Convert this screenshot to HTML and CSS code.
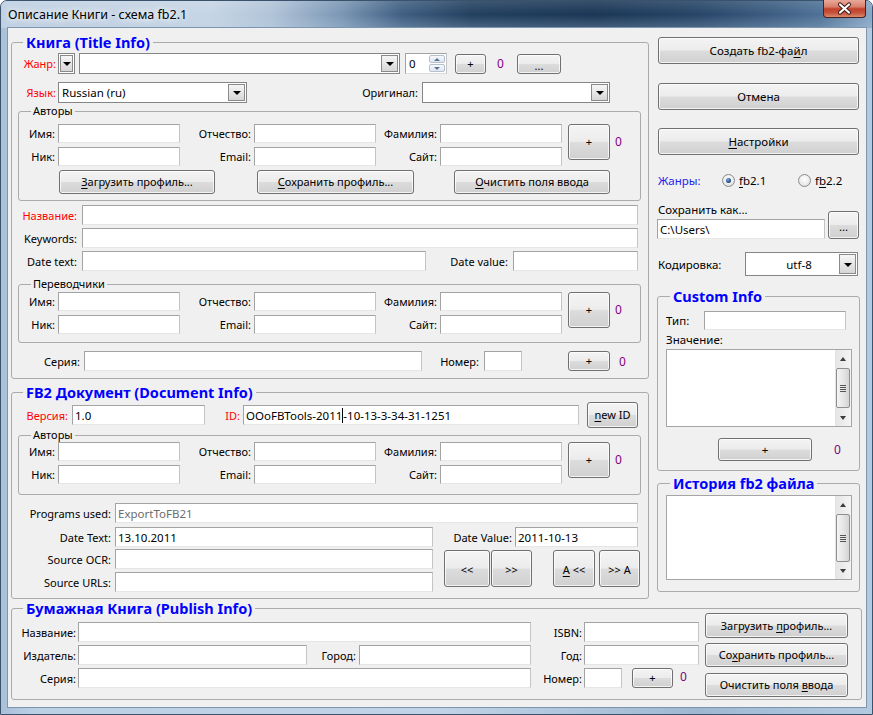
FILE: index.html
```html
<!DOCTYPE html>
<html lang="ru">
<head>
<meta charset="utf-8">
<title>Описание Книги - схема fb2.1</title>
<link rel="stylesheet" href="styles.css">
</head>
<body>
<div class="window">
  <div class="titlebar">
    <span class="caption">Описание Книги - схема fb2.1</span>
    <div class="close-btn">
      <svg width="41" height="17" viewBox="0 0 41 17">
        <path d="M16 4.5 L25 12.5 M25 4.5 L16 12.5" stroke="#3d1b1b" stroke-width="4.2" stroke-linecap="round"/>
        <path d="M16 4.5 L25 12.5 M25 4.5 L16 12.5" stroke="#ffffff" stroke-width="2.2" stroke-linecap="round"/>
      </svg>
    </div>
  </div>

  <div class="client">
    <div class="col-left">
      <fieldset class="group pb7">
        <legend>Книга (Title Info)</legend>
        <div class="row h21 mt2">
          <span class="lbl red w46 pr2">Жанр:</span>
          <span class="combo w17"><span class="dd"></span></span>
          <span class="combo w321 ml4"><span class="cval"></span><span class="dd"></span></span>
          <span class="spin w42 ml5"><span class="cval">0</span><span class="spinbtns"><span class="sb up"></span><span class="sb down"></span></span></span>
          <button class="btn w31 h20 ml8">+</button>
          <span class="count ml11">0</span>
          <button class="btn w44 h20 ml13 dots">...</button>
        </div>
        <div class="row h21 mt8">
          <span class="lbl red w46 pr2">Язык:</span>
          <span class="combo w189"><span class="cval">Russian (ru)</span><span class="dd"></span></span>
          <span class="lbl w173 pr2">Оригинал:</span>
          <span class="combo w188 ml2"><span class="cval"></span><span class="dd"></span></span>
        </div>

        <fieldset class="sub pb6 mt1">
          <legend>Авторы</legend>
          <div class="people mt6">
            <span class="plbl">Имя:</span><span class="input"></span>
            <span class="plbl">Отчество:</span><span class="input"></span>
            <span class="plbl">Фамилия:</span><span class="input"></span>
            <span></span>
            <button class="btn pplus">+</button>
            <span class="count pcount">0</span>
            <span class="plbl">Ник:</span><span class="input"></span>
            <span class="plbl">Email:</span><span class="input"></span>
            <span class="plbl">Сайт:</span><span class="input"></span>
          </div>
          <div class="row h24 mt4">
            <button class="btn w156 h24 ml40"><span><u>З</u>агрузить профиль...</span></button>
            <button class="btn w157 h24 ml42"><span><u>С</u>охранить профиль...</span></button>
            <button class="btn w156 h24 ml40"><span><u>О</u>чистить поля ввода</span></button>
          </div>
        </fieldset>

        <div class="row h20 mt4">
          <span class="lbl red w70 pr5">Название:</span>
          <span class="input w556"></span>
        </div>
        <div class="row h20 mt3">
          <span class="lbl w70 pr5">Keywords:</span>
          <span class="input w556"></span>
        </div>
        <div class="row h20 mt3">
          <span class="lbl w70 pr5">Date text:</span>
          <span class="input w344"></span>
          <span class="lbl w87 pr5">Date value:</span>
          <span class="input w125"></span>
        </div>

        <fieldset class="sub pb8 mt6">
          <legend>Переводчики</legend>
          <div class="people mt1">
            <span class="plbl">Имя:</span><span class="input"></span>
            <span class="plbl">Отчество:</span><span class="input"></span>
            <span class="plbl">Фамилия:</span><span class="input"></span>
            <span></span>
            <button class="btn pplus">+</button>
            <span class="count pcount">0</span>
            <span class="plbl">Ник:</span><span class="input"></span>
            <span class="plbl">Email:</span><span class="input"></span>
            <span class="plbl">Сайт:</span><span class="input"></span>
          </div>
        </fieldset>

        <div class="row h20 mt8">
          <span class="lbl w72 pr4">Серия:</span>
          <span class="input w338"></span>
          <span class="lbl w62 pr5">Номер:</span>
          <span class="input w38"></span>
          <button class="btn w42 h20 ml46">+</button>
          <span class="count ml9">0</span>
        </div>
      </fieldset>

      <fieldset class="group pb6 mt4">
        <legend>FB2 Документ (Document Info)</legend>
        <div class="row h26 mt1">
          <span class="lbl red w60 pr4">Версия:</span>
          <span class="input w133 h20">1.0</span>
          <span class="lbl red w38 pr3">ID:</span>
          <span class="input w336 h20">OOoFBTools-2011<span class="caret"></span>-10-13-3-34-31-1251</span>
          <button class="btn w51 h26 ml8"><span><u>n</u>ew ID</span></button>
        </div>

        <fieldset class="sub pb10">
          <legend>Авторы</legend>
          <div class="people">
            <span class="plbl">Имя:</span><span class="input"></span>
            <span class="plbl">Отчество:</span><span class="input"></span>
            <span class="plbl">Фамилия:</span><span class="input"></span>
            <span></span>
            <button class="btn pplus">+</button>
            <span class="count pcount">0</span>
            <span class="plbl">Ник:</span><span class="input"></span>
            <span class="plbl">Email:</span><span class="input"></span>
            <span class="plbl">Сайт:</span><span class="input"></span>
          </div>
        </fieldset>

        <div class="row h20 mt8">
          <span class="lbl w103 pr4">Programs used:</span>
          <span class="input w523 grey">ExportToFB21</span>
        </div>
        <div class="row h20 mt4">
          <span class="lbl w103 pr4">Date Text:</span>
          <span class="input w318">13.10.2011</span>
          <span class="lbl w82 pr3">Date Value:</span>
          <span class="input w123">2011-10-13</span>
        </div>
        <div class="srcblock mt2">
          <div class="srcrows">
            <div class="row h20">
              <span class="lbl w103 pr4">Source OCR:</span>
              <span class="input w318"></span>
            </div>
            <div class="row h20 mt3">
              <span class="lbl w103 pr4">Source URLs:</span>
              <span class="input w318"></span>
            </div>
          </div>
          <button class="btn w46 h37 ml11 mt1 low">&lt;&lt;</button>
          <button class="btn w41 h37 ml1 mt1 low">&gt;&gt;</button>
          <button class="btn w42 h37 ml21 mt1 low"><span><u>A</u> &lt;&lt;</span></button>
          <button class="btn w41 h37 ml4 mt1 low">&gt;&gt; A</button>
        </div>
      </fieldset>
    </div>

    <div class="col-right">
      <button class="btn w201 h27 ml1 mt4"><span>Создать fb2-фа<u>й</u>л</span></button>
      <button class="btn w201 h27 ml1 mt19">Отмена</button>
      <button class="btn w201 h27 ml1 mt18"><span><u>Н</u>астройки</span></button>

      <div class="row h16 mt17">
        <span class="genres">Жанры:</span>
        <span class="opt w76"><span class="radio"><span class="dot"></span></span><span class="optlbl"><u>f</u>b2.1</span></span>
        <span class="opt"><span class="radio"></span><span class="optlbl">f<u>b</u>2.2</span></span>
      </div>

      <div class="saveas mt15">
        <div class="savecol">
          <span class="savelbl">Сохранить как...</span>
          <span class="input w168 h20 mt2">C:\Users\</span>
        </div>
        <button class="btn w31 h28 ml3 dots">...</button>
      </div>

      <div class="row h24 mt13">
        <span class="enclbl">Кодировка:</span>
        <span class="combo w113 h24"><span class="cval center">utf-8</span><span class="dd"></span></span>
      </div>

      <fieldset class="group pb9 mt11">
        <legend class="rlegend">Custom Info</legend>
        <div class="row h19 mt6">
          <span class="typelbl">Тип:</span>
          <span class="input w142 h19"></span>
        </div>
        <div class="vallbl mt3">Значение:</div>
        <div class="textarea h78 mt2">
          <div class="vscroll">
            <span class="sarrow up"></span>
            <span class="thumb t40"><span class="grip"></span></span>
            <span class="sarrow down"></span>
          </div>
        </div>
        <div class="row h23 mt11">
          <button class="btn w94 h23 ml60">+</button>
          <span class="count ml22">0</span>
        </div>
      </fieldset>

      <fieldset class="group pb11 mt3">
        <legend class="rlegend">История fb2 файла</legend>
        <div class="textarea h85 mt3">
          <div class="vscroll">
            <span class="sarrow up"></span>
            <span class="thumb t48"><span class="grip"></span></span>
            <span class="sarrow down"></span>
          </div>
        </div>
      </fieldset>
    </div>

    <fieldset class="group pub pb2">
      <legend>Бумажная Книга (Publish Info)</legend>
      <div class="pubbody">
        <div class="pubrows mt5">
          <div class="row h20">
            <span class="lbl w66 pr2">Название:</span>
            <span class="input w453"></span>
            <span class="lbl w53 pr2">ISBN:</span>
            <span class="input w115"></span>
          </div>
          <div class="row h20 mt3">
            <span class="lbl w66 pr2">Издатель:</span>
            <span class="input w229"></span>
            <span class="lbl w52 pr3">Город:</span>
            <span class="input w172"></span>
            <span class="lbl w53 pr2">Год:</span>
            <span class="input w115"></span>
          </div>
          <div class="row h20 mt3">
            <span class="lbl w66 pr2">Серия:</span>
            <span class="input w453"></span>
            <span class="lbl w53 pr2">Номер:</span>
            <span class="input w38"></span>
            <button class="btn w41 h20 ml10">+</button>
            <span class="count ml7 up2">0</span>
          </div>
        </div>
        <div class="pubbtns ml6">
          <button class="btn w143 h25"><span>Загрузить <u>п</u>рофиль...</span></button>
          <button class="btn w143 h24 mt5"><span>Со<u>х</u>ранить профиль...</span></button>
          <button class="btn w143 h24 mt6"><span>Очистить поля <u>в</u>вода</span></button>
        </div>
      </div>
    </fieldset>
  </div>
</div>
</body>
</html>
```

FILE: styles.css
```css
* { box-sizing: border-box; }
html, body { margin: 0; padding: 0; }
body {
  width: 873px; height: 715px; overflow: hidden;
  background: #ffffff;
  font-family: "Noto Sans", "Open Sans", sans-serif;
  font-size: 11px; color: #000;
}
u { text-decoration: underline; text-underline-offset: 2px; }

/* window frame */
.window {
  width: 873px; height: 715px;
  display: flex; flex-direction: column;
  border: 1px solid #3b526c;
  border-radius: 7px 7px 0 0;
  background: linear-gradient(90deg, #a9c0d8 0%, #bcd0e4 4%, #c1d3e6 50%, #9fb8d1 80%, #b3c9df 100%);
}
.titlebar {
  height: 27px; flex: none;
  display: flex; align-items: flex-start;
  padding: 0 6px 0 7px;
  border-radius: 6px 6px 0 0;
  background:
    linear-gradient(180deg, rgba(255,255,255,0.12) 0%, rgba(255,255,255,0) 50%, rgba(190,210,230,0.25) 100%),
    linear-gradient(90deg, #bfd0e2 0%, #c6d5e5 24%, #b1c4d8 31%, #7b97b5 39%, #3f5f82 46%, #22405f 54%, #1b3656 68%, #264567 80%, #3b5c80 88%, #4e7196 94%, #89a7c6 100%);
}
.caption {
  font-size: 12.5px;
  line-height: 27px;
  text-shadow: 0 0 6px rgba(255,255,255,0.95), 0 0 10px rgba(255,255,255,0.85), 0 0 14px rgba(255,255,255,0.6);
}
.close-btn {
  margin-left: auto;
  width: 43px; height: 18px; margin-top: -1px;
  border: 1px solid #47221f; border-top: none;
  border-radius: 0 0 4px 4px;
  background: linear-gradient(180deg, #e9a99a 0%, #d9806c 40%, #c2412a 52%, #c5523a 75%, #db8a6c 100%);
  display: flex; align-items: center; justify-content: center;
}

/* client */
.client {
  flex: 1;
  margin: 0 6px 7px 7px;
  background: #f0f0f0;
  box-shadow: 0 0 0 1px #7d95ae;
  padding: 5px 0 0 3px;
  display: grid;
  grid-template-columns: 638px 203px;
  column-gap: 8px;
  align-content: start;
  align-items: start;
}
.col-left { grid-column: 1; grid-row: 1; display: flex; flex-direction: column; }
.col-right { grid-column: 2; grid-row: 1; display: flex; flex-direction: column; }
.pub { grid-column: 1 / -1; grid-row: 2; width: 851px; }

/* group boxes */
.group {
  margin: 0; padding: 0;
  border: 1px solid #ababab; border-radius: 3px;
  min-width: 0;
}
.group > legend {
  padding: 0 3px; margin-left: 11px;
  font-weight: bold; font-size: 14.5px; line-height: 18px;
  color: #0000ff;
}
.group > legend.rlegend { margin-left: 12px; }
.sub {
  margin: 0 7px 0 6px; padding: 0;
  border: 1px solid #ababab; border-radius: 3px;
  min-width: 0;
}
.sub > legend { padding: 0 2px; margin-left: 12px; font-size: 11px; line-height: 14px; }

/* rows & labels */
.row { display: flex; align-items: center; flex: none; }
.lbl { flex: none; text-align: right; white-space: nowrap; }
.red { color: #ff0000; }
.count { color: #800080; width: 7px; flex: none; font-size: 12px; }
.up2 { position: relative; top: -2px; }

/* inputs */
.input {
  flex: none; height: 20px;
  background: #fff;
  border: 1px solid; border-color: #a3a3a3 #c4c4c4 #e6e6e6 #a3a3a3;
  padding: 0 2px;
  display: flex; align-items: center;
  white-space: nowrap; overflow: hidden;
  font-size: 11.5px;
}
.grey { color: #6d6d6d; }
.caret { display: inline-block; width: 1px; height: 15px; background: #000; }

/* combo boxes */
.combo {
  flex: none; height: 21px;
  display: flex; align-items: stretch;
  background: #fff;
  border: 1px solid #858585;
  padding: 1px;
  font-size: 11.5px;
}
.cval { flex: 1; padding: 0 2px; display: flex; align-items: center; white-space: nowrap; }
.cval.center { justify-content: center; padding-left: 14px; }
.dd {
  flex: none; width: 17px; margin-left: auto;
  border: 1px solid #8a8a8a;
  background: linear-gradient(180deg, #f6f6f6 0%, #e6e6e6 50%, #d6d6d6 100%);
  display: flex; align-items: center; justify-content: center;
}
.combo.w17 .dd { width: 13px; }
.dd::before {
  content: ""; width: 0; height: 0;
  border-left: 4px solid transparent; border-right: 4px solid transparent;
  border-top: 4px solid #000;
  margin-top: 1px;
}

/* spin */
.spin {
  flex: none; height: 21px;
  display: flex;
  background: #fff;
  border: 1px solid; border-color: #a3a3a3 #c4c4c4 #dcdcdc #a3a3a3;
  font-size: 11.5px;
}
.spin .cval { padding-left: 3px; }
.spinbtns { width: 18px; display: flex; flex-direction: column; padding: 1px; gap: 1px; }
.sb {
  flex: 1;
  border: 1px solid #b4c0cd; border-radius: 2px;
  background: linear-gradient(180deg, #f7f9fb, #dfe6ee);
  display: flex; align-items: center; justify-content: center;
}
.sb.up::before { content: ""; border-left: 3px solid transparent; border-right: 3px solid transparent; border-bottom: 3px solid #5676a0; }
.sb.down::before { content: ""; border-left: 3px solid transparent; border-right: 3px solid transparent; border-top: 3px solid #5676a0; }

/* buttons */
.btn {
  flex: none;
  font: inherit; color: #000;
  padding: 0; margin-top: 0; margin-bottom: 0; margin-right: 0;
  border: 1px solid #707070; border-radius: 3px;
  background: linear-gradient(180deg, #f4f4f4 0%, #ececec 48%, #dcdcdc 52%, #d0d0d0 100%);
  box-shadow: inset 0 0 0 1px rgba(255,255,255,0.75);
  display: flex; align-items: center; justify-content: center;
  white-space: nowrap;
  line-height: 14px;
}
.btn.dots { padding-top: 4px; }
.btn.low { padding-top: 3px; }

/* people grid */
.people {
  display: grid;
  grid-template-columns: 39px 122px 74px 122px 64px 122px 6px 42px auto;
  grid-template-rows: 19px 19px;
  row-gap: 4px;
}
.people .input { height: 19px; }
.plbl { text-align: right; padding-right: 3px; line-height: 19px; white-space: nowrap; }
.pplus { grid-column: 8; grid-row: 1 / 3; height: 36px; align-self: start; }
.pcount { grid-column: 9; grid-row: 1 / 3; align-self: start; margin-top: 11px; margin-left: 5px; line-height: 14px; }

/* source block */
.srcblock { display: flex; align-items: flex-start; }
.srcrows { display: flex; flex-direction: column; }

/* right column */
.col-right { font-size: 11.5px; }
.genres { color: #2424f2; width: 64px; margin-left: 1px; flex: none; }
.opt { display: flex; align-items: center; flex: none; }
.radio {
  width: 13px; height: 13px; border-radius: 50%;
  border: 1px solid #8b8b8b;
  background: radial-gradient(circle at 50% 40%, #ffffff 0%, #ececec 55%, #d2d2d2 100%);
  display: flex; align-items: center; justify-content: center;
  flex: none;
}
.dot {
  width: 5px; height: 5px; border-radius: 50%;
  background: radial-gradient(circle at 40% 35%, #7fb0e6 0%, #2a5a97 50%, #0e2a52 100%);
}
.optlbl { margin-left: 4px; }
.saveas { display: flex; align-items: flex-end; }
.savecol { display: flex; flex-direction: column; }
.savelbl { line-height: 14px; margin-left: 1px; }
.enclbl { width: 88px; padding-left: 1px; flex: none; }
.typelbl { width: 46px; padding-left: 8px; flex: none; }
.vallbl { line-height: 14px; margin-left: 8px; }

.textarea {
  margin-left: 8px; width: 186px;
  background: #fff;
  border: 1px solid #a5a5a5;
  display: flex; justify-content: flex-end;
}
.vscroll {
  width: 16px;
  display: flex; flex-direction: column;
  background: linear-gradient(90deg, #e4e4e4, #f4f4f4);
}
.sarrow { height: 17px; flex: none; display: flex; align-items: center; justify-content: center; }
.sarrow.up::before { content: ""; border-left: 3.5px solid transparent; border-right: 3.5px solid transparent; border-bottom: 4px solid #3c3c3c; }
.sarrow.down { margin-top: auto; }
.sarrow.down::before { content: ""; border-left: 3.5px solid transparent; border-right: 3.5px solid transparent; border-top: 4px solid #3c3c3c; }
.thumb {
  flex: none; margin: 1px 1px 0 1px;
  border: 1px solid #8f8f8f; border-radius: 2px;
  background: linear-gradient(90deg, #f4f4f4 0%, #e6e6e6 50%, #d4d4d4 100%);
  display: flex; align-items: center; justify-content: center;
}
.t40 { height: 40px; }
.t48 { height: 48px; }
.grip {
  width: 6px; height: 7px;
  background: repeating-linear-gradient(180deg, #555 0, #555 1px, transparent 1px, transparent 2px);
}

/* publish */
.pubbody { display: flex; align-items: flex-start; }
.pubrows { display: flex; flex-direction: column; }
.pubbtns { display: flex; flex-direction: column; margin-top: -4px; }

/* sizes */
.w17 { width: 17px; } .w31 { width: 31px; } .w38 { width: 38px; } .w41 { width: 41px; }
.w42 { width: 42px; } .w44 { width: 44px; } .w46 { width: 46px; } .w51 { width: 51px; }
.w52 { width: 52px; } .w53 { width: 53px; } .w60 { width: 60px; } .w62 { width: 62px; }
.w66 { width: 66px; } .w70 { width: 70px; } .w72 { width: 72px; } .w76 { width: 76px; }
.w82 { width: 82px; } .w87 { width: 87px; } .w94 { width: 94px; } .w103 { width: 103px; }
.w113 { width: 113px; } .w115 { width: 115px; } .w122 { width: 122px; } .w123 { width: 123px; }
.w125 { width: 125px; } .w133 { width: 133px; } .w142 { width: 142px; } .w143 { width: 143px; }
.w156 { width: 156px; } .w157 { width: 157px; } .w168 { width: 168px; } .w172 { width: 172px; }
.w173 { width: 173px; } .w188 { width: 188px; } .w189 { width: 189px; } .w201 { width: 201px; }
.w229 { width: 229px; } .w318 { width: 318px; } .w321 { width: 321px; } .w336 { width: 336px; }
.w338 { width: 338px; } .w344 { width: 344px; } .w453 { width: 453px; } .w523 { width: 523px; }
.w556 { width: 556px; }
.h16 { height: 16px; } .h19 { height: 19px; } .h20 { height: 20px; } .h21 { height: 21px; }
.h23 { height: 23px; } .h24 { height: 24px; } .h25 { height: 25px; } .h26 { height: 26px; }
.h27 { height: 27px; } .h28 { height: 28px; } .h37 { height: 37px; } .h78 { height: 78px; }
.h85 { height: 85px; }
.pr2 { padding-right: 2px; } .pr3 { padding-right: 3px; } .pr4 { padding-right: 4px; } .pr5 { padding-right: 5px; }
.ml1 { margin-left: 1px; } .ml2 { margin-left: 2px; } .ml3 { margin-left: 3px; } .ml4 { margin-left: 4px; }
.ml5 { margin-left: 5px; } .ml6 { margin-left: 6px; } .ml7 { margin-left: 7px; } .ml8 { margin-left: 8px; }
.ml9 { margin-left: 9px; } .ml10 { margin-left: 10px; } .ml11 { margin-left: 11px; } .ml13 { margin-left: 13px; }
.ml21 { margin-left: 21px; } .ml22 { margin-left: 22px; } .ml40 { margin-left: 40px; } .ml42 { margin-left: 42px; }
.ml46 { margin-left: 46px; } .ml60 { margin-left: 60px; }
.mt1 { margin-top: 1px; } .mt2 { margin-top: 2px; } .mt3 { margin-top: 3px; } .mt4 { margin-top: 4px; }
.mt5 { margin-top: 5px; } .mt6 { margin-top: 6px; } .mt8 { margin-top: 8px; } .mt11 { margin-top: 11px; }
.mt13 { margin-top: 13px; } .mt15 { margin-top: 15px; } .mt17 { margin-top: 17px; } .mt18 { margin-top: 18px; }
.mt19 { margin-top: 19px; }
.pb2 { padding-bottom: 2px; } .pb6 { padding-bottom: 6px; } .pb7 { padding-bottom: 7px; } .pb8 { padding-bottom: 8px; }
.pb9 { padding-bottom: 9px; } .pb10 { padding-bottom: 10px; } .pb11 { padding-bottom: 11px; }
```
